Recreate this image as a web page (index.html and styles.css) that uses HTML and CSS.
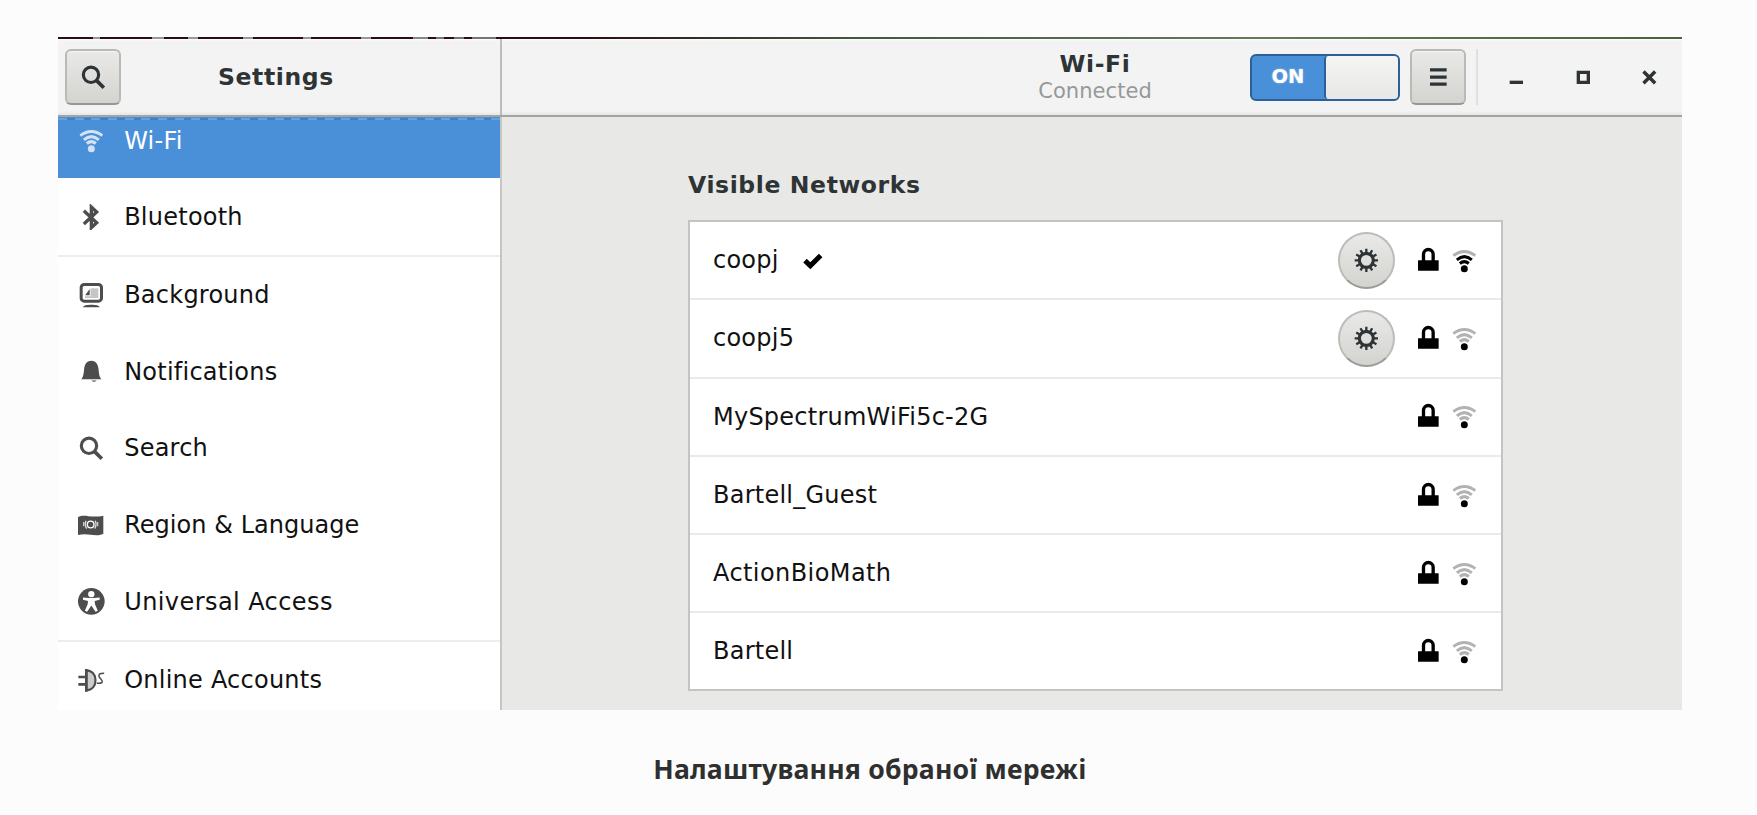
FILE: index.html
```
<!DOCTYPE html>
<html lang="uk">
<head>
<meta charset="utf-8">
<title>Wi-Fi</title>
<link rel="stylesheet" href="styles.css">
</head>
<body>
<svg class="defs" aria-hidden="true">
  <symbol id="search" viewBox="0 0 16 16"><circle cx="6.6" cy="6.5" r="4.6" fill="none" stroke="currentColor" stroke-width="1.9"/><path d="M10 10l4.3 4.3" stroke="currentColor" stroke-width="2.2"/></symbol>
  <symbol id="lock" viewBox="0 0 16 16"><rect x="1.8" y="7.900" width="12.4" height="6.300" rx=".3"/><path d="M5.1 8.5V4.400a2.9 2.9 0 0 1 5.8 0v4.100" fill="none" stroke="currentColor" stroke-width="2"/></symbol>
  <symbol id="wifi" viewBox="0 0 16 16"><g fill="none" stroke="currentColor" stroke-width="1.8"><path class="w3" d="M1.4 5.200Q8 .3 14.600 5.200"/><path class="w2" d="M3.5 7.700Q8 3.900 12.5 7.700"/><path class="w1" d="M5.300 9.900Q8 7.600 10.700 9.900"/></g><circle cx="8" cy="13" r="2.100"/></symbol>
  <symbol id="gear" viewBox="0 0 16 16"><circle cx="8" cy="8" r="4.200" fill="none" stroke="currentColor" stroke-width="1.900"/><g stroke="currentColor" stroke-width="1.400"><path id="tooth" d="M8 1v3M8 12v3"/><use href="#tooth" transform="rotate(30 8 8)"/><use href="#tooth" transform="rotate(60 8 8)"/><use href="#tooth" transform="rotate(90 8 8)"/><use href="#tooth" transform="rotate(120 8 8)"/><use href="#tooth" transform="rotate(150 8 8)"/></g></symbol>
</svg>
<figure class="figure">
  <div class="window">
    <div class="desktop-edge"></div>
    <header class="header">
      <div class="header-side">
        <button class="btn"><svg class="icon"><use href="#search"/></svg></button>
        <h1 class="title side-title">Settings</h1>
      </div>
      <div class="header-main">
        <div class="heading"><div class="title">Wi-Fi</div><div class="subtitle">Connected</div></div>
        <div class="switch"><span class="switch-on">ON</span><span class="switch-knob"></span></div>
        <button class="btn menu"><svg class="icon" viewBox="0 0 16 16"><path d="M3 3.5h10M3 7.9h10M3 12.1h10" fill="none" stroke="currentColor" stroke-width="2"/></svg></button>
        <div class="controls">
          <svg class="icon" viewBox="0 0 16 16"><path d="M4 10h8v2H4z"/></svg>
          <svg class="icon" viewBox="0 0 16 16"><path d="M5 5h6v6H5z" fill="none" stroke="currentColor" stroke-width="2"/></svg>
          <svg class="icon" viewBox="0 0 16 16"><path d="M4.5 4.5l7 7M11.5 4.5l-7 7" stroke="currentColor" stroke-width="2.1"/></svg>
        </div>
      </div>
    </header>
    <div class="body">
      <nav class="sidebar">
        <div class="item selected"><svg class="icon"><use href="#wifi"/></svg><span>Wi-Fi</span></div>
        <div class="item last"><svg class="icon" viewBox="0 0 16 16"><path d="M3.500 4L11.200 11.200 8 14.200V1.800L11.200 4.800 3.500 12" fill="none" stroke="currentColor" stroke-width="2"/></svg><span>Bluetooth</span></div>
        <div class="item"><svg class="icon" viewBox="0 0 16 16"><rect x="1.9" y="1.5" width="12.2" height="10" rx="1.8" fill="none" stroke="currentColor" stroke-width="1.8"/><path d="M4.200 3.8h8v5.8h-8z" opacity=".32"/><path d="M4 3.200h3.500v5.300H4z" fill="#fff"/><path d="M4.300 8L7 4.2V8z"/><path d="M3 15.200c0-2 10-2 10 0z"/></svg><span>Background</span></div>
        <div class="item"><svg class="icon" viewBox="0 0 16 16"><path d="M8 1.7c3 0 4 2.300 4.300 4.800.3 3.200.5 4.800 1.700 6.300H2c1.200-1.500 1.400-3.100 1.700-6.300C4 4 5 1.700 8 1.700z"/><path d="M8 13.500h3.200q-1.600 1.600-3.200 0z"/></svg><span>Notifications</span></div>
        <div class="item"><svg class="icon"><use href="#search"/></svg><span>Search</span></div>
        <div class="item tight"><svg class="icon" viewBox="0 0 16 16"><path d="M0 3c4-2 7 .8 15.200-.8v10.800c-5 2.300-9-.8-15.200.8z"/><g fill="none" stroke="#fff" stroke-width=".8"><circle cx="7.600" cy="7.500" r="2"/><path d="M4.800 5.300q-1 2.500.4 4.700M10.400 5.300q1 2.500-.4 4.700" opacity=".8"/><path d="M3.400 6v2.500M11.800 6v2.500" opacity=".7"/></g></svg><span>Region &amp; Language</span></div>
        <div class="item last loose"><svg class="icon" viewBox="0 0 16 16"><circle cx="8" cy="8" r="8"/><g fill="#fff"><circle cx="8" cy="3.700" r="1.900"/><path d="M3 5.700l3.500.3h3l3.500-.3v1.300l-3 .8.200 2 1.700 3.900-1.400.6L8 10.500l-2.500 3.800-1.400-.6 1.700-3.900.2-2-3-.8z"/></g></svg><span>Universal Access</span></div>
        <div class="item"><svg class="icon" viewBox="0 0 16 16"><path d="M5 2c3.500.2 5.500 2.600 5.500 6S8.500 13.800 5 14z" fill="#ccc" stroke="currentColor" stroke-width="1.300"/><path d="M.2 5.200h4.300v1.600H.2zM.2 9.600h4.300v1.600H.2zM4.200 1.200h1.600v13.600H4.200z"/><path d="M15.700 3.700c-3 0-3.500.8-3 2.200s2.300 1.700 1.800 3.200c-.4.900-1.600.7-3.300.7" fill="none" stroke="currentColor" stroke-width=".9"/></svg><span>Online Accounts</span></div>
      </nav>
      <main class="content">
        <h2 class="title list-title">Visible Networks</h2>
        <div class="networks">
          <div class="network good"><span>coopj</span><svg class="icon check" viewBox="0 0 16 16"><path d="M3.600 8.200l3.200 3.100 6.200-6.200" fill="none" stroke="currentColor" stroke-width="3"/></svg><span class="gear"><svg class="icon"><use href="#gear"/></svg></span><svg class="icon lock"><use href="#lock"/></svg><svg class="icon"><use href="#wifi"/></svg></div>
          <div class="network"><span>coopj5</span><span class="gear"><svg class="icon"><use href="#gear"/></svg></span><svg class="icon lock"><use href="#lock"/></svg><svg class="icon"><use href="#wifi"/></svg></div>
          <div class="network"><span>MySpectrumWiFi5c-2G</span><svg class="icon lock"><use href="#lock"/></svg><svg class="icon"><use href="#wifi"/></svg></div>
          <div class="network"><span>Bartell_Guest</span><svg class="icon lock"><use href="#lock"/></svg><svg class="icon"><use href="#wifi"/></svg></div>
          <div class="network loose"><span>ActionBioMath</span><svg class="icon lock"><use href="#lock"/></svg><svg class="icon"><use href="#wifi"/></svg></div>
          <div class="network"><span>Bartell</span><svg class="icon lock"><use href="#lock"/></svg><svg class="icon"><use href="#wifi"/></svg></div>
        </div>
      </main>
    </div>
  </div>
  <figcaption class="caption">Налаштування обраної мережі</figcaption>
</figure>
</body>
</html>
```

FILE: styles.css
```
* { box-sizing: border-box; }
body { margin: 0; height: 815px; overflow: hidden; background: #fcfcfc; }
.defs { display: none; }
.figure { margin: 0; padding: 37px 75px 0 58px; }
.window {
  height: 673px; overflow: hidden; display: flex; flex-direction: column;
  background: #e8e8e6; color: #111;
  font: 24px/28px "DejaVu Sans", sans-serif; letter-spacing: .24px;
}
.desktop-edge {
  flex: none; height: 2px;
  background: linear-gradient(90deg, #2a0d10 0 35px, #999 35px 42px, #2a0d10 42px 94px, #999 94px 106px, #2a0d10 106px 130px, #999 130px 140px, #2a0d10 140px 185px, #999 185px 195px, #2a0d10 195px 245px, #999 245px 253px, #2a0d10 253px 303px, #999 303px 313px, #2a0d10 313px 355px, #888 355px 370px, #2a0d10 370px 378px, #777 378px 386px, #2a0d10 386px 396px, #777 396px 406px, #2a0d10 406px 414px, #777 414px 438px, #2a0d10 438px 520px, #43593f 800px, #657a5d 1200px, #48623f);
}
.icon { flex: none; width: 26.67px; height: 26.67px; fill: currentColor; display: block; }
.title { margin: 0; font-size: 23.500px; line-height: 28px; font-weight: 700; letter-spacing: .62px; color: #2e3436; }
.header {
  flex: none; height: 78px; display: flex; color: #2e3436;
  background: linear-gradient(#fff, #f3f3f3 2px, #f3f3f3 72px, #e6e6e5 76px);
  border-bottom: 2px solid #a4a4a0;
}
.header-side { width: 444px; padding: 10px 0 0 7px; display: flex; border-right: 2px solid #bcbcba; }
.side-title { padding: 14px 0 0 97px; }
.header-main { flex: 1; display: flex; padding-top: 10px; }
.btn {
  flex: none; width: 56px; height: 56px; padding: 0; display: grid; place-items: center; color: #2e3436;
  border: 2px solid #b9b9b6; border-bottom-color: #979793; border-radius: 6px;
  background: linear-gradient(#e9e9e7, #d3d3d0); box-shadow: inset 0 1px #f5f5f4;
}
.heading { width: 186px; margin-left: 500px; text-align: center; }
.heading .title { margin-top: 1px; }
.subtitle { font-size: 21px; line-height: 26px; letter-spacing: .05px; color: #959999; }
.switch {
  flex: none; width: 150px; height: 47px; margin: 5px 10px 0 62px; display: flex;
  border: 2px solid #2b609a; border-radius: 6px; background: #4a90d9;
}
.switch-on {
  width: 72px; text-align: center; font-size: 19.5px; line-height: 42px; font-weight: 700; letter-spacing: 0; color: #fff;
  text-shadow: 0 0 2px #fff8;
}
.switch-knob { flex: 1; border-left: 2px solid #2b609a; border-radius: 4px; background: linear-gradient(#f5f5f4, #e7e7e6); }
.controls { display: flex; gap: 40px; height: 56px; align-items: center; margin-left: 10px; padding-left: 25px; border-left: 2px solid #e0e0de; }
.body { flex: 1; min-height: 0; display: flex; }
.sidebar { width: 444px; background: #fff; border-right: 2px solid #c6c6c3; overflow: hidden; display: flex; flex-direction: column; }
.item { flex: none; height: 76.6px; padding-left: 20px; display: flex; align-items: center; gap: 19.500px; }
.item .icon { color: #4d4d4d; }
.item.last { height: 78.800px; border-bottom: 2px solid #ededed; }
.item.selected {
  height: 61px; padding-bottom: 14px; color: #fff;
  background: repeating-linear-gradient(90deg, #62a1e2 0 9px, #3f7fc3 9px 16.670px) 0 1px / 100% 2px no-repeat, #4a90d9;
}
.item.selected + .item { padding-top: 1px; }
.item.selected .icon { color: #d2e3f6; }
.content { flex: 1; padding: 54px 179px 0 186px; }
.list-title { margin-bottom: 21px; }
.networks { border: 2px solid #c4c4c2; background: #fff; }
.network { height: 78.300px; padding: 0 23px 0 23px; display: flex; align-items: center; border-bottom: 2px solid #eaeaea; }
.network:last-child { border-bottom: 0; height: 76px; }
.network > span:first-child { margin-right: auto; }
.network .check { margin: 0 auto 0 20px; }
.network.good > span:first-child { margin-right: 0; }
.tight { letter-spacing: .04px; }
.loose { letter-spacing: .42px; }
.gear {
  width: 57px; height: 57px; margin-right: 20px; border-radius: 50%; display: grid; place-items: center;
  border: 2px solid #bcbcb9; border-bottom-color: #9b9b97; background: linear-gradient(#e9e9e7, #d3d3d0);
}
.network .icon { color: #000; }
.network .gear .icon { color: #2e3436; }
.network .lock { margin-right: 10px; }
.network { --outer: .3; --inner: .3; }
.network.good { --inner: 1; }
.w3 { opacity: var(--outer, 1); }
.w2, .w1 { opacity: var(--inner, 1); }
.caption { margin-top: 41px; text-align: center; font: 700 26.600px/36px "Noto Sans", sans-serif; letter-spacing: .2px; color: #2f2f2f; }
```
